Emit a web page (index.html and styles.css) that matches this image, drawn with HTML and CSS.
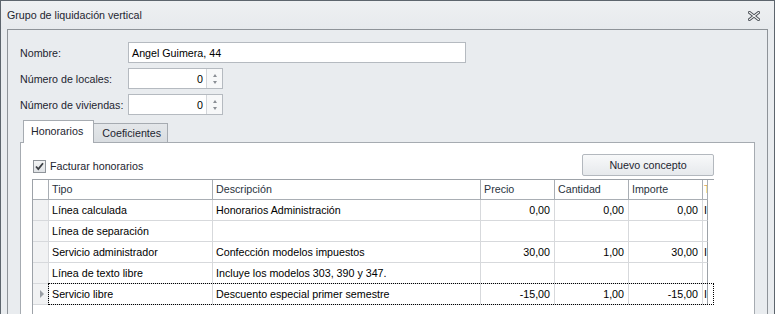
FILE: index.html
```html
<!DOCTYPE html>
<html lang="es">
<head>
    <meta charset="UTF-8">
    <title>Grupo de liquidación vertical</title>
    <link rel="stylesheet" href="styles.css">
</head>
<body>

    <div class="window">
        <div class="titlebar">
            <span class="title">Grupo de liquidación vertical</span>
            <svg class="close" width="12" height="10" viewBox="0 0 12 10">
                <path d="M1.5 1.5 L10.5 8.5 M10.5 1.5 L1.5 8.5" stroke="#4a4f55" stroke-width="3" stroke-linecap="square"/>
                <path d="M1.5 1.5 L10.5 8.5 M10.5 1.5 L1.5 8.5" stroke="#f4f5f6" stroke-width="1.2" stroke-linecap="square"/>
            </svg>
        </div>

        <div class="group">
            <div class="form">
                <span class="label">Nombre:</span>
                <div class="field name">Angel Guimera, 44</div>

                <span class="label">Número de locales:</span>
                <div class="field spin">
                    <span class="value">0</span>
                    <span class="spin-btns"><i class="up"></i><i class="down"></i></span>
                </div>

                <span class="label">Número de viviendas:</span>
                <div class="field spin">
                    <span class="value">0</span>
                    <span class="spin-btns"><i class="up"></i><i class="down"></i></span>
                </div>
            </div>

            <div class="tabs">
                <div class="tab active">Honorarios</div>
                <div class="tab">Coeficientes</div>
            </div>

            <div class="tab-page">
                <div class="toolbar">
                    <label class="check">
                        <span class="box">
                            <svg width="11" height="11" viewBox="0 0 11 11">
                                <path d="M2 5.5 L4.3 8 L9 2.2" fill="none" stroke="#3c3f44" stroke-width="1.8"/>
                            </svg>
                        </span>
                        Facturar honorarios
                    </label>
                    <button class="btn">Nuevo concepto</button>
                </div>

                <div class="grid">
                    <div class="row head">
                        <div class="ind"></div>
                        <div class="cells">
                            <div>Tipo</div>
                            <div>Descripción</div>
                            <div>Precio</div>
                            <div>Cantidad</div>
                            <div>Importe</div>
                            <div>T</div>
                        </div>
                    </div>
                    <div class="row">
                        <div class="ind"></div>
                        <div class="cells">
                            <div>Línea calculada</div>
                            <div>Honorarios Administración</div>
                            <div class="num">0,00</div>
                            <div class="num">0,00</div>
                            <div class="num">0,00</div>
                            <div>I</div>
                        </div>
                    </div>
                    <div class="row">
                        <div class="ind"></div>
                        <div class="cells">
                            <div>Línea de separación</div>
                            <div></div>
                            <div></div>
                            <div></div>
                            <div></div>
                            <div></div>
                        </div>
                    </div>
                    <div class="row">
                        <div class="ind"></div>
                        <div class="cells">
                            <div>Servicio administrador</div>
                            <div>Confección modelos impuestos</div>
                            <div class="num">30,00</div>
                            <div class="num">1,00</div>
                            <div class="num">30,00</div>
                            <div>I</div>
                        </div>
                    </div>
                    <div class="row">
                        <div class="ind"></div>
                        <div class="cells">
                            <div>Línea de texto libre</div>
                            <div>Incluye los modelos 303, 390 y 347.</div>
                            <div></div>
                            <div></div>
                            <div></div>
                            <div></div>
                        </div>
                    </div>
                    <div class="row current">
                        <div class="ind"><span class="arrow"></span></div>
                        <div class="cells">
                            <div>Servicio libre</div>
                            <div>Descuento especial primer semestre</div>
                            <div class="num">-15,00</div>
                            <div class="num">1,00</div>
                            <div class="num">-15,00</div>
                            <div>I</div>
                        </div>
                    </div>
                </div>
            </div>
        </div>
    </div>

</body>
</html>
```

FILE: styles.css
```css
body {
    margin: 0;
    font-family: 'Liberation Sans', Arial, sans-serif;
    font-size: 10.7px;
    color: #1d2530;
}

.window {
    width: 775px;
    height: 314px;
    box-sizing: border-box;
    border: 1px solid #5d656d;
    border-bottom: none;
    background-color: #e9ecef;
    display: flex;
    flex-direction: column;
    overflow: hidden;
}

.titlebar {
    height: 28px;
    flex: none;
    display: flex;
    align-items: center;
    justify-content: space-between;
    padding: 0 14px 0 6px;
    background: linear-gradient(#eef0f2, #e7eaed);
}

.close {
    display: block;
    margin-top: 2px;
}

.group {
    flex: 1;
    margin: 0 6px;
    padding: 12px 12px 0 12px;
    border: 1px solid #8e9398;
    border-bottom: none;
    display: flex;
    flex-direction: column;
    min-height: 0;
}

/* campos de cabecera */

.form {
    display: grid;
    grid-template-columns: 108px auto;
    row-gap: 5px;
    align-items: center;
    justify-items: start;
}

.field {
    height: 21px;
    box-sizing: border-box;
    border: 1px solid #b5bac0;
    background-color: #fff;
    color: #000;
    display: flex;
    align-items: center;
}

.field.name {
    width: 338px;
    padding-left: 3px;
}

.field.spin {
    width: 95px;
}

.field .value {
    flex: 1;
    text-align: right;
    padding-right: 3px;
}

.spin-btns {
    width: 15px;
    height: 100%;
    border-left: 1px solid #d3d6da;
    background-color: #f7f8f9;
    display: flex;
    flex-direction: column;
    align-items: center;
    justify-content: center;
    gap: 4px;
}

.spin-btns i {
    width: 0;
    height: 0;
    border-left: 2.5px solid transparent;
    border-right: 2.5px solid transparent;
}

.spin-btns .up {
    border-bottom: 3px solid #8a8f95;
}

.spin-btns .down {
    border-top: 3px solid #8a8f95;
}

/* pestañas */

.tabs {
    display: flex;
    align-items: flex-end;
    padding-left: 3px;
    margin-top: 5px;
    margin-bottom: -1px;
    position: relative;
    z-index: 1;
}

.tab {
    height: 19px;
    box-sizing: border-box;
    padding: 0 6px 0 8px;
    margin-bottom: 1px;
    border: 1px solid #a6abb1;
    border-left: none;
    border-bottom: none;
    background: linear-gradient(#e4e7ea, #d9dde1);
    line-height: 19px;
}

.tab.active {
    height: 23px;
    margin-bottom: 0;
    padding: 0 10px 0 7px;
    border-left: 1px solid #a6abb1;
    background: #fff;
    line-height: 20px;
}

.tab-page {
    flex: 1;
    background-color: #fff;
    border: 1px solid #a6abb1;
    border-bottom: none;
    padding: 11px 40px 0 11px;
    display: flex;
    flex-direction: column;
    min-height: 0;
}

.toolbar {
    display: flex;
    align-items: center;
    justify-content: space-between;
    height: 22px;
    margin-bottom: 3px;
}

.check {
    display: flex;
    align-items: center;
    gap: 4px;
    margin-left: 1px;
    margin-top: 2px;
}

.check .box {
    width: 13px;
    height: 13px;
    box-sizing: border-box;
    border: 1px solid #8f949a;
    background: linear-gradient(#f3f4f5, #dfe2e5);
    display: flex;
    align-items: center;
    justify-content: center;
}

.check svg {
    display: block;
}

.btn {
    width: 132px;
    height: 22px;
    font-family: inherit;
    font-size: 10.7px;
    color: #1d2530;
    border: 1px solid #b3b8be;
    border-radius: 2px;
    background: linear-gradient(#f8f9fa, #e6e9ec);
    padding: 0;
}

/* rejilla de conceptos */

.grid {
    flex: 1;
    border-left: 1px solid #9da2a8;
    border-top: 1px solid #9da2a8;
    width: 681px;
}

.row {
    display: flex;
    height: 21px;
    position: relative;
}

.row .ind {
    width: 15px;
    flex: none;
    background-color: #f1f2f3;
    border-right: 1px solid #d7d9dc;
    border-bottom: 1px solid #d7d9dc;
    display: flex;
    align-items: center;
    justify-content: center;
}

.cells {
    display: grid;
    grid-template-columns: 164px 268px 74px 74px 74px 5px;
    color: #000;
}

.cells div {
    border-right: 1px solid #d7d9dc;
    border-bottom: 1px solid #d7d9dc;
    padding: 0 3px;
    line-height: 20px;
    white-space: nowrap;
    overflow: hidden;
}

.cells div:last-child {
    padding: 0 0 0 1px;
    border-right-color: #9da2a8;
}

.cells .num {
    text-align: right;
    padding-right: 4px;
}

.row.head {
    height: 20px;
}

.row.head .ind,
.row.head .cells div {
    border-color: #a9aeb4;
    line-height: 19px;
    color: #2a3340;
}

.row.head .cells div:last-child {
    color: #d9a55a;
}

.row.head .ind {
    background-color: #fff;
}

.current .cells::after {
    content: "";
    position: absolute;
    left: 15px;
    top: -1px;
    right: 0;
    bottom: 0;
    border: 1px dotted #000;
}

.arrow {
    width: 0;
    height: 0;
    border-top: 4px solid transparent;
    border-bottom: 4px solid transparent;
    border-left: 4px solid #9a9fa5;
    margin-left: 2px;
}
```
